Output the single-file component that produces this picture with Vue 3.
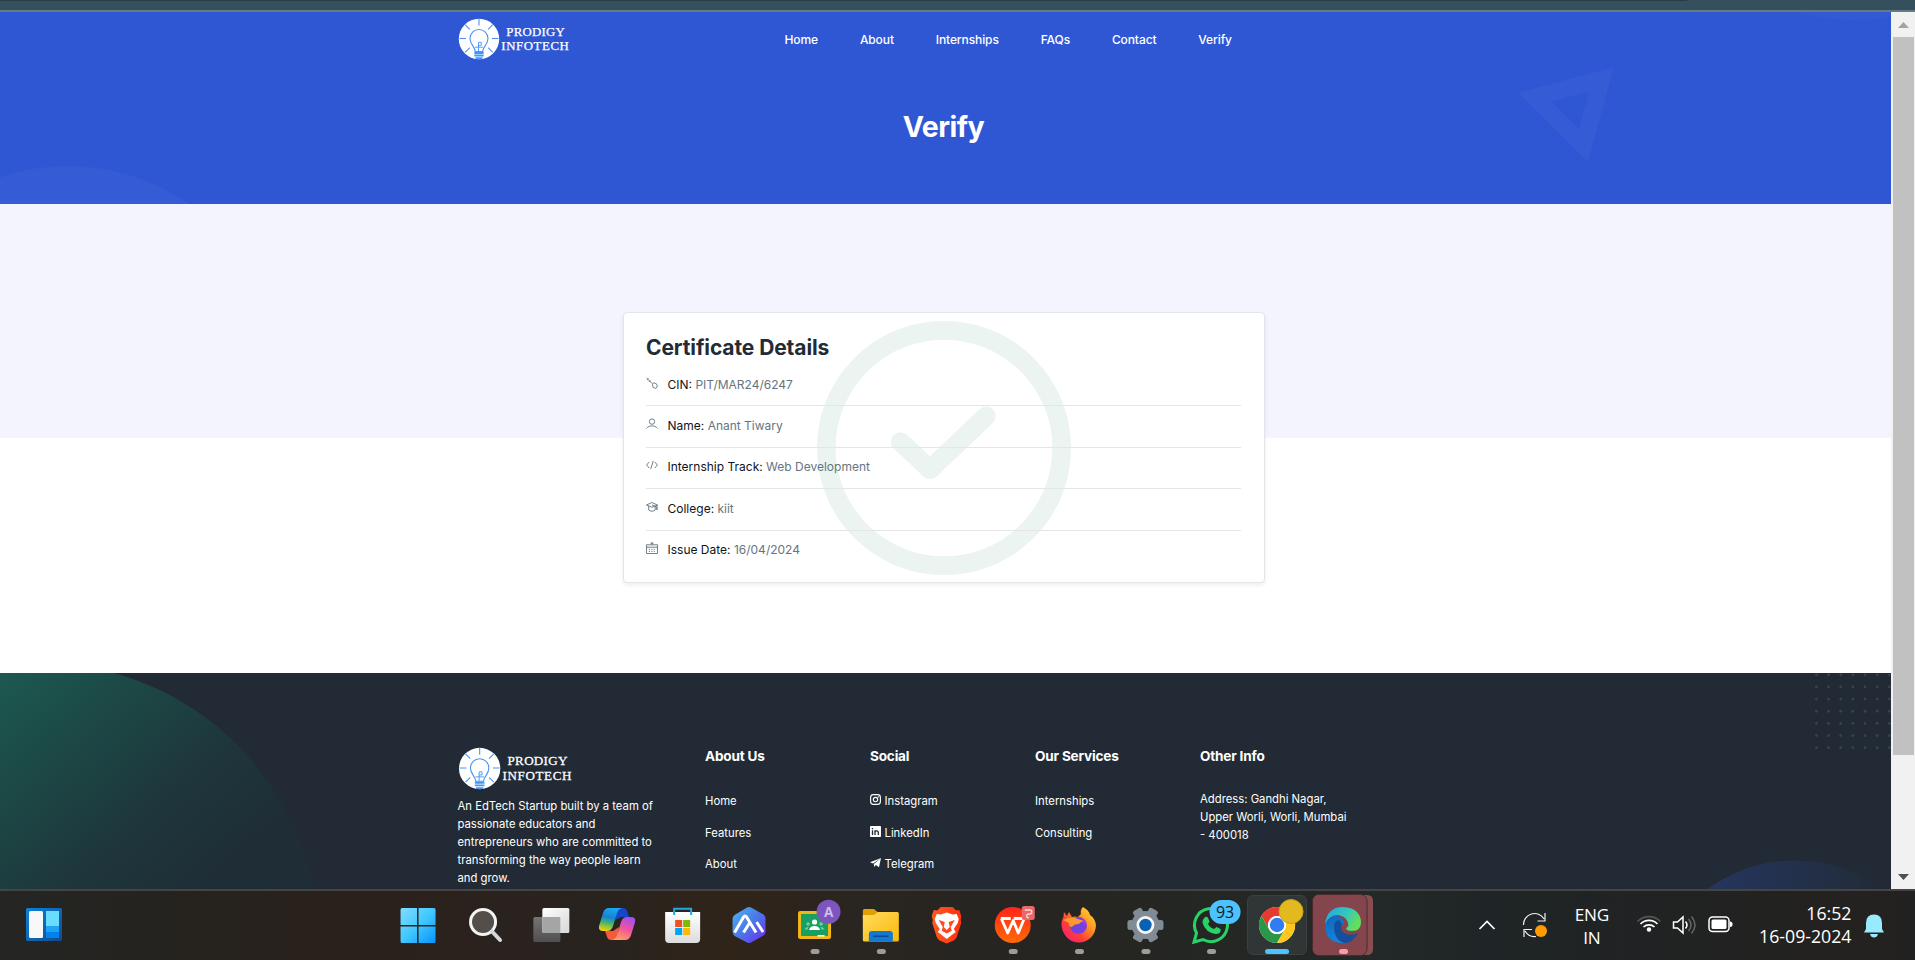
<script setup>
const navLinks = ['Home', 'About', 'Internships', 'FAQs', 'Contact', 'Verify']

const details = [
  { icon: 'key', label: 'CIN:', value: 'PIT/MAR24/6247' },
  { icon: 'user', label: 'Name:', value: 'Anant Tiwary' },
  { icon: 'code', label: 'Internship Track:', value: 'Web Development' },
  { icon: 'cap', label: 'College:', value: 'kiit' },
  { icon: 'calendar', label: 'Issue Date:', value: '16/04/2024' }
]

const dots = []
for (let r = 0; r < 7; r++) for (let c = 0; c < 7; c++) dots.push([1816.4 + c * 12.15, 1.8 + r * 12.15])
const rays = [0, 45, 90, 135, 225, 270, 315]
const teeth = [0, 60, 120, 180, 240, 300]
</script>

<template>
  <div class="screen">
    <svg width="0" height="0" class="defs" aria-hidden="true">
      <defs>
        <symbol id="logo" viewBox="0 0 116 44">
          <circle cx="21" cy="21" r="20.2" fill="#fff" />
          <g stroke="#4694f8" stroke-width="1.1" fill="none">
            <path v-for="a in rays" :key="a" d="M21 1v6.5" :transform="`rotate(${a} 21 20.5)`" />
            <path d="M17.2 33.5c0-5-5.2-6.500-5.200-13a9 9 0 0 1 18 0c0 6.500-5.200 8-5.200 13z" />
            <path d="M20.500 33V24.300h2.800v3h-2.800M17 29.200h8.200" stroke-width=".9" />
            <path d="M16.300 35h9.400M16.300 37.500h9.400M17.500 40.200h7" stroke-width="1.8" />
          </g>
          <g fill="#fff" stroke="#fff" stroke-width=".25" font-family="'Liberation Serif', serif" font-size="12.8">
            <text x="48.300" y="17.500" textLength="58.500">PRODIGY</text>
            <text x="43.300" y="32" textLength="67.500">INFOTECH</text>
          </g>
        </symbol>
      </defs>
    </svg>

    <div class="chrome-edge"></div>

    <div class="viewport">
      <main class="page">
        <header class="hero">
          <svg class="backdrop" width="1891" height="192" viewBox="0 12 1891 192">
            <circle cx="68" cy="379" r="213" fill="#355bd5" />
            <circle cx="1855" cy="-193" r="213" fill="#335ad6" />
            <path fill="#365cd5" fill-rule="evenodd" d="M1518 92.500 1613.500 67.500 1588 162zM1551 101.500 1579 129 1589 91.500z" />
          </svg>
          <div class="bar">
            <svg class="logo" width="116" height="44"><use href="#logo" /></svg>
            <nav>
              <a v-for="l in navLinks" :key="l">{{ l }}</a>
            </nav>
          </div>
          <h1>Verify</h1>
        </header>

        <section class="verify">
          <div class="card">
            <svg class="check" width="256" height="256" viewBox="0 0 256 256" fill="none" stroke="#ebf4f0">
              <circle cx="128" cy="128" r="117.700" stroke-width="18.700" />
              <path d="M84.500 121.800 114 149.500 170.300 96" stroke-width="19" stroke-linecap="round" stroke-linejoin="round" />
            </svg>
            <h2>Certificate Details</h2>
            <ul>
              <li v-for="d in details" :key="d.label">
                <svg class="ico" width="12" height="12" viewBox="0 0 12 12" fill="none" stroke="#6a7983" stroke-width=".95">
                  <template v-if="d.icon === 'key'">
                    <path d="M.5.8 6.500 6.800M1 3.200 2.600 1.700M2.800 5 4.400 3.400" />
                    <path d="M6.300 7.200 7.900 5.700 10.900 7.300 11.200 10 9.600 11.400 7.200 10.500z" />
                  </template>
                  <template v-else-if="d.icon === 'user'">
                    <circle cx="6" cy="3.600" r="2.700" />
                    <path d="M.5 10.500C2 8.500 4 7.900 6 7.900s4 .6 5.500 2.600" />
                  </template>
                  <path v-else-if="d.icon === 'code'" d="M3.200 3 .6 6l2.600 3M8.800 3l2.600 3-2.600 3M7.300 1.800 4.700 10" />
                  <template v-else-if="d.icon === 'cap'">
                    <path d="M.5 4 5.800 1.500 11.500 4 6 6.300zM2.700 5v4c2 1.600 4.800 1.600 6.500 0V5M11 4v5" />
                    <path d="M6 4l4.800 2v3" />
                  </template>
                  <template v-else>
                    <path d="M.5 2.800h11v8.700H.5zM.5 5.200h11M6 0v3M4.500 1.300h3" />
                    <path d="M2.800 7.300h6.800M2.800 9.400h6.800" stroke-dasharray="1.200 1.200" />
                  </template>
                </svg>
                <span><b>{{ d.label }}</b> {{ d.value }}</span>
              </li>
            </ul>
          </div>
        </section>

        <footer>
          <svg class="backdrop" width="1891" height="216" viewBox="0 0 1891 216">
            <defs>
              <linearGradient id="green" gradientUnits="userSpaceOnUse" x1="-20" y1="-30" x2="200" y2="220">
                <stop offset="0" stop-color="#1c6055" />
                <stop offset=".35" stop-color="#1c4b47" />
                <stop offset=".7" stop-color="#1e373c" />
                <stop offset="1" stop-color="#1f2d36" />
              </linearGradient>
              <linearGradient id="navy" gradientUnits="userSpaceOnUse" x1="1700" y1="210" x2="1880" y2="230">
                <stop offset="0" stop-color="#253660" />
                <stop offset="1" stop-color="#212b37" />
              </linearGradient>
            </defs>
            <circle cx="40" cy="268" r="278" fill="url(#green)" />
            <circle cx="1795" cy="335.500" r="148" fill="url(#navy)" />
            <circle v-for="(p, i) in dots" :key="i" :cx="p[0]" :cy="p[1]" r="1.400" fill="#39434d" />
          </svg>
          <div class="cols">
            <div class="about">
              <svg class="logo" width="119" height="45" viewBox="0 0 116 44"><use href="#logo" width="116" height="44" /></svg>
              <p>An EdTech Startup built by a team of passionate educators and entrepreneurs who are committed to transforming the way people learn and grow.</p>
            </div>
            <div>
              <h3>About Us</h3>
              <a>Home</a><a>Features</a><a>About</a>
            </div>
            <div>
              <h3>Social</h3>
              <a>
                <svg width="11" height="11" viewBox="0 0 11 11" fill="none" stroke="#fff" stroke-width="1.150">
                  <rect x=".6" y=".6" width="9.800" height="9.800" rx="2.800" /><circle cx="5.500" cy="5.500" r="2.200" /><path d="M7.700 2.900h1.200" />
                </svg>Instagram</a>
              <a>
                <svg width="11" height="11" viewBox="0 0 11 11">
                  <rect width="11" height="11" rx=".8" fill="#fff" />
                  <path d="M2.500 4.300V9M2.500 2v1.200M5 9V4.300M5 6.300c0-2 3.300-2 3.300 0V9" fill="none" stroke="#222b35" stroke-width="1.300" />
                </svg>LinkedIn</a>
              <a>
                <svg width="11" height="11" viewBox="0 0 11 11" fill="#fff">
                  <path d="M11 1 0 5.200l3 1.300zM11 1 3.800 7l.4 3 1.600-1.900L9 10.200z" />
                </svg>Telegram</a>
            </div>
            <div>
              <h3>Our Services</h3>
              <a>Internships</a><a>Consulting</a>
            </div>
            <div>
              <h3>Other Info</h3>
              <p class="addr">Address: Gandhi Nagar, Upper Worli, Worli, Mumbai - 400018</p>
            </div>
          </div>
        </footer>
      </main>

      <aside class="scrollbar">
        <svg width="24" height="25"><path d="M7 16 12.500 10 18 16z" fill="#a3a3a3" /></svg>
        <div class="thumb"></div>
        <svg width="24" height="25"><path d="M7 12 12.500 18 18 12z" fill="#505050" /></svg>
      </aside>
    </div>

    <div class="taskbar">
      <svg class="widgets" width="36" height="33" viewBox="0 0 36 33">
        <defs>
          <linearGradient id="wg" x2="1" y2="1"><stop stop-color="#0a84dc" /><stop offset="1" stop-color="#134a8c" /></linearGradient>
        </defs>
        <rect width="36" height="33" rx="1.500" fill="url(#wg)" />
        <rect x="3" y="3" width="14" height="27" rx="1.500" fill="#f8f8f8" />
        <path d="M20 3h13v15H20z" fill="#6adcff" /><path d="M20 18h13v6H20z" fill="#1ba4f8" /><path d="M20 24h13v6H20z" fill="#0582ea" />
      </svg>

      <div class="apps">
        <svg viewBox="0 0 66 69">
          <defs><linearGradient id="win" gradientUnits="userSpaceOnUse" x1="16" y1="17" x2="50" y2="52"><stop stop-color="#80dcff" /><stop offset=".5" stop-color="#40c8ff" /><stop offset="1" stop-color="#0894fc" /></linearGradient></defs>
          <path fill="url(#win)" d="M15.500 18.500q0-1.500 1.500-1.500h15v17H15.500zM33.500 17H49q1.500 0 1.500 1.500V34h-17zM15.500 35.500H32V52H17q-1.500 0-1.500-1.500zM33.500 35.500h17v15q0 1.500-1.500 1.500H33.500z" />
        </svg>
        <svg viewBox="-2 0 66 69">
          <circle cx="30" cy="31" r="12.500" fill="#534e49" stroke="#f4f4f4" stroke-width="3" />
          <path d="M39 40.500 47 49" stroke="#d4d8de" stroke-width="4" stroke-linecap="round" />
        </svg>
        <svg viewBox="-1.300 0 66 69">
          <defs>
            <linearGradient id="tv" x2="1" y2="1"><stop stop-color="#fff" /><stop offset="1" stop-color="#d7d7d7" /></linearGradient>
            <linearGradient id="tv2" x2="0" y2="1"><stop stop-color="#747474" /><stop offset="1" stop-color="#505050" /></linearGradient>
          </defs>
          <rect x="15" y="26" width="27" height="25" rx="1.500" fill="url(#tv2)" />
          <rect x="24" y="17" width="27" height="25" rx="1.500" fill="url(#tv)" />
          <path d="M24 26h18v16H24z" fill="#a5a5a5" />
        </svg>
        <svg viewBox="-1 0 66 69">
          <defs>
            <linearGradient id="cp1" x1=".5" x2=".3" y2="1"><stop stop-color="#1aa8f0" /><stop offset=".4" stop-color="#1583d4" /><stop offset=".65" stop-color="#45b46d" /><stop offset="1" stop-color="#f6d20a" /></linearGradient>
            <linearGradient id="cp2" x1=".7" x2=".3" y2="1"><stop stop-color="#a44df0" /><stop offset=".5" stop-color="#f0559c" /><stop offset="1" stop-color="#ffa35c" /></linearGradient>
          </defs>
          <path d="M33 17h6q3 0 4 3l2 6h-8l-6 3z" fill="#1747c8" />
          <path d="M33 49h-6q-3 0-4-3l-2-6h8l6-4z" fill="#f55a3c" />
          <path d="M25 17h13q-4 1-5 5l-4 13q-1.500 5-6 5h-4q-5 0-4-5l4-13q1.500-5 6-5z" fill="url(#cp1)" />
          <path d="M41 49H28q4-1 5-5l4-13q1.500-5 6-5h4q5 0 4 5l-4 13q-1.500 5-6 5z" fill="url(#cp2)" />
        </svg>
        <svg viewBox="-.6 0 66 69">
          <defs><linearGradient id="st" x2="0" y2="1"><stop stop-color="#fff" /><stop offset="1" stop-color="#dcdcdc" /></linearGradient></defs>
          <path d="M15.500 21h35v27q0 4-4 4h-27q-4 0-4-4z" fill="url(#st)" />
          <path d="M24.500 24v-6.200h17V24" fill="none" stroke="#20a8ec" stroke-width="2" />
          <path d="M25.500 29h7v7h-7z" fill="#f25022" /><path d="M33.500 29h7v7h-7z" fill="#7fba00" />
          <path d="M25.500 37h7v7h-7z" fill="#00a4ef" /><path d="M33.500 37h7v7h-7z" fill="#ffb900" />
        </svg>
        <svg viewBox="-1 0 66 69">
          <defs><linearGradient id="hx" x1="0" x2="1" y2="1"><stop stop-color="#50b4f0" /><stop offset=".5" stop-color="#4a78e8" /><stop offset="1" stop-color="#7028f0" /></linearGradient></defs>
          <path d="M31 16.500q2-1 4 0l12.500 7q2 1.500 2 4v13q0 2.500-2 4L35 51.500q-2 1-4 0L18.500 45q-2-1.500-2-4V28q0-2.500 2-4z" fill="url(#hx)" />
          <path d="M18.500 41.500 27.500 26q1.500-2 3 0l9.500 15.500M27.500 41.500 33.500 32M40.500 31l6.500 10" fill="none" stroke="#fff" stroke-width="3" />
        </svg>
        <svg viewBox="-1.500 0 66 69">
          <rect x="15.500" y="20" width="33" height="28" rx="2" fill="#f4b815" />
          <path d="M18.500 23h27v22h-27z" fill="#17a062" />
          <g fill="#fff"><circle cx="32" cy="31" r="2.600" /><path d="M26.500 39q1-4 5.500-4t5.500 4zM35 44h7v1.500h-7z" /></g>
          <g fill="#7cc9a3"><circle cx="25.500" cy="33" r="1.800" /><circle cx="38.500" cy="33" r="1.800" /><path d="M22 38.500q1-3 4-2.500l-1 2.500zM42 38.500q-1-3-4-2.500l1 2.500z" /></g>
          <circle cx="46" cy="20.800" r="12" fill="#7d55be" />
          <text x="46" y="25.800" text-anchor="middle" class="badge" font-size="13.500" fill="#cdbce9">A</text>
          <rect class="dot" x="28" y="58" width="9" height="5" rx="2.500" />
        </svg>
        <svg viewBox="-.8 0 66 69">
          <defs><linearGradient id="fo" x2="1" y2="1"><stop stop-color="#ffdc60" /><stop offset="1" stop-color="#fcb808" /></linearGradient></defs>
          <path d="M15 19.500q0-1.500 1.500-1.500H26l5 4v6H15z" fill="#e0a000" />
          <path d="M15 24h11l4-3h19.500q1.500 0 1.500 1.500V49q0 1.500-1.500 1.500H16.500Q15 50.500 15 49z" fill="url(#fo)" />
          <path d="M21 50.500V43q0-3 3-3h18q3 0 3 3v7.500z" fill="#1478d0" /><path d="M26 45.200h14" stroke="#0a4a98" stroke-width="1.600" stroke-linecap="round" />
          <rect class="dot" x="29" y="58" width="9" height="5" rx="2.500" />
        </svg>
        <svg viewBox="-.7 0 66 69">
          <defs><linearGradient id="br" x2="1"><stop stop-color="#ff5a20" /><stop offset="1" stop-color="#ff3010" /></linearGradient></defs>
          <path d="M27 16h12l3.500 3.500 3-.5 2 6-.5 4 .5 3L43 46q-1 2-3 3.500L33 52.500l-7-3Q24 48 23 46l-4.500-14 .5-3-1-4 2-6 3.500.5z" fill="url(#br)" />
          <path d="M23 23l4 .5 6-2 6 2 4-.5 2 5-1 4-4 6 2 3-4 3-5 4-5-4-4-3 2-3-4-6-1-4z" fill="#fff" />
          <path d="M25 29l6 2-1 5 3 3 3-3-1-5 6-2-4 7 1 4-5 2.500-5-2.500 1-4z" fill="#ff4820" />
          <path d="M30 25h6l-3 10zM28 40l5 3 5-3-1 3-4 1-4-1z" fill="#fff" />
        </svg>
        <svg viewBox="-.7 0 66 69">
          <defs><linearGradient id="wp" x2="0" y2="1"><stop stop-color="#ff2418" /><stop offset="1" stop-color="#ff6a08" /></linearGradient></defs>
          <circle cx="33" cy="34" r="18" fill="url(#wp)" />
          <path d="M21 27.500h10M21.500 27.500 28 42l5.500-12.500L38.500 42l6-14.500H34" fill="none" stroke="#fff" stroke-width="2.800" stroke-linejoin="round" />
          <rect x="42" y="15" width="13" height="14" rx="2.500" fill="#e8696a" />
          <path d="M45 19h5q2 0 2 2t-2 2h-1q-2 0-2 2t2 1.500" fill="none" stroke="#ffd8d8" stroke-width="1.300" />
          <rect class="dot" x="29" y="58" width="9" height="5" rx="2.500" />
        </svg>
        <svg viewBox="-.9 0 66 69">
          <defs><linearGradient id="ff" x1="1" x2="0" y2="1"><stop stop-color="#ffe83c" /><stop offset=".35" stop-color="#ff9a20" /><stop offset=".65" stop-color="#ff3c38" /><stop offset="1" stop-color="#f0188c" /></linearGradient></defs>
          <path d="M37 16q6 3 7 8 5 3 6 10 0 7-5 12.500-6 5.500-13 5-7-.5-11.500-5.500-5-6-5-13 0-4 2-7l.5-5 3 4 2-4 3 5q3-1 6 0l3-3q-1-4 2-7z" fill="url(#ff)" />
          <circle cx="32.500" cy="34.500" r="8.500" fill="#7441e0" />
          <path d="M17 29q8-4 15-1l6 2q-4 1-5 3-5 0-7 3-4-1-3-4z" fill="#ff9a28" />
          <path d="M36 27q5 2 5 8-1-2-3-3z" fill="#b03cd8" />
          <rect class="dot" x="29" y="58" width="9" height="5" rx="2.500" />
        </svg>
        <svg viewBox="-.4 0 66 69">
          <g fill="#818b96"><circle cx="33" cy="34" r="14" />
            <path v-for="a in teeth" :key="a" d="M40 29.500l8.500-.5q2.500 0 2.500 2.500v5q0 2.500-2.500 2.500l-8.500-.5z" :transform="`rotate(${a} 33 34)`" /></g>
          <circle cx="33" cy="34" r="7.600" fill="#0a61b2" stroke="#f6f6f6" stroke-width="2.800" />
          <rect class="dot" x="29" y="58" width="9" height="5" rx="2.500" />
        </svg>
        <svg viewBox="0 0 66 69">
          <path d="M16 51l2.500-9A16.500 16.500 0 1 1 25 48.500z" fill="none" stroke="#27d366" stroke-width="3" />
          <path d="M27 26q2-1 3 1l1.500 3.500L30 33q2 4 6 5l2.500-2 4 2q1 5-5 5-10-1.500-13-11 0-4 2.500-6z" fill="#27d366" />
          <rect x="31.500" y="9" width="31" height="24" rx="12" fill="#4cc2ff" />
          <text x="47" y="26.500" text-anchor="middle" class="num" font-size="16" fill="#0c1a22">93</text>
          <rect class="dot" x="29" y="58" width="9" height="5" rx="2.500" />
        </svg>
        <svg viewBox="0 0 66 69">
          <rect x="3.500" y="4.500" width="59" height="59" rx="5.500" fill="#303535" stroke="#3c4040" />
          <circle cx="33" cy="34" r="18" fill="#fff" />
          <path d="M33 25h15.600A18 18 0 0 0 17.400 25l7.800 13.500A9 9 0 0 1 33 25z" fill="#e63b30" />
          <path d="M25.200 38.500 17.400 25A18 18 0 0 0 33 52l7.800-13.500A9 9 0 0 1 25.200 38.500z" fill="#2a9846" />
          <path d="M33 25h15.600A18 18 0 0 1 33 52l7.800-13.500A9 9 0 0 0 33 25z" fill="#fcc820" />
          <circle cx="33" cy="34" r="9" fill="#fff" /><circle cx="33" cy="34" r="7.200" fill="#2f7df0" />
          <circle cx="47" cy="20.500" r="12" fill="#e2b91f" stroke="#c9a21a" />
          <rect x="21" y="58" width="24" height="5" rx="2.500" fill="#4cc2ff" />
        </svg>
        <svg viewBox="0 0 66 69">
          <defs>
            <linearGradient id="ed" x2="1" y2=".4"><stop stop-color="#28a0e0" /><stop offset=".6" stop-color="#34c8c0" /><stop offset="1" stop-color="#60e05c" /></linearGradient>
            <linearGradient id="ed2" x2=".4" y2="1"><stop stop-color="#1464b8" /><stop offset="1" stop-color="#0f88e0" /></linearGradient>
          </defs>
          <path d="M52 4h5q6 0 6 6v48q0 6-6 6h-5z" fill="#874d51" />
          <rect x="2.500" y="3.500" width="54.500" height="61" rx="6.500" fill="#84464c" stroke="#4a2d30" />
          <rect x="3" y="4" width="52" height="60" rx="6" fill="#84464c" />
          <path d="M15 34Q15 25 22 24q9 0 12 7l-3 5q-1 10 10 12-3 4-9 4-17-1-17-18z" fill="url(#ed2)" />
          <path d="M24 35q0-5 5-6l3 4q-3 7 4 10 6 2 12-1-5 10-14 10-10-3-10-17z" fill="#134f9e" />
          <path d="M15 33Q17 16 33 16q17 1 18 15 0 9-9 9-6 0-6-3 3-1 2-5-2-7-10-8-9 0-13 9z" fill="url(#ed)" />
          <rect x="29" y="58" width="9" height="5" rx="2.500" fill="#ff9aa4" />
        </svg>
      </div>

      <div class="tray">
        <svg class="up" width="18" height="12" fill="none" stroke="#fff" stroke-width="1.700"><path d="M1.500 10 9 2.500 16.500 10" /></svg>
        <svg class="sync" width="26" height="26" fill="none" stroke="#f2f2f2" stroke-width="1.200">
          <path d="M1.500 13A11 11 0 0 1 22 7M23 1v8h-7.500M2 25v-7.500h8M3 19q4 6.500 11 5.500" />
          <circle cx="19" cy="19" r="6" fill="#ff9a00" stroke="none" />
        </svg>
        <div class="lang">ENG<br>IN</div>
        <svg class="wifi" width="26" height="20" fill="none" stroke="#fff" stroke-width="1.700">
          <path d="M1.500 8.500a16 16 0 0 1 23 0" stroke="#555" /><path d="M4.500 11a12 12 0 0 1 17 0M7.500 14a8 8 0 0 1 11 0" />
          <circle cx="13" cy="16.500" r="2.200" fill="#fff" stroke="none" />
        </svg>
        <svg class="vol" width="25" height="20" fill="none" stroke="#fff" stroke-width="1.500">
          <path d="M1.500 7h4L11 2v16L5.500 13h-4zM13.500 6.500q3 3.500 0 7" /><path d="M16.500 4q5 6 0 12M19.500 1.500q7 8.500 0 17" stroke="#666" />
        </svg>
        <svg class="bat" width="26" height="18">
          <rect x="1" y="1" width="20" height="14.500" rx="3.500" fill="none" stroke="#fff" stroke-width="1.500" />
          <rect x="3.500" y="3.500" width="15" height="9.500" rx="1.500" fill="#fff" /><path d="M22 5.500q2.500 0 2.500 2.800T22 11z" fill="#fff" />
        </svg>
        <div class="clock">16:52<br>16-09-2024</div>
        <svg class="bell" width="20" height="24" fill="#98eaff">
          <path d="M0 18.500 2 15V9q0-8.500 8-8.500T18 9v6l2 3.500zM6 20h8q-1 3.500-4 3.500T6 20z" />
        </svg>
      </div>
    </div>
  </div>
</template>

<style>
body { margin: 0; overflow: hidden; }
</style>

<style scoped>
.screen {
  width: 1915px; height: 960px; overflow: hidden;
  display: flex; flex-direction: column;
  font-family: Inter, 'Liberation Sans', sans-serif;
}
.defs { position: absolute; }
.chrome-edge {
  flex: none; height: 12px; box-sizing: border-box;
  border-bottom: 2px solid #637c82;
  background: linear-gradient(90deg, #2c3b43 1685px, #33505c 1690px) top / 100% 1px no-repeat, #33505c;
}
.viewport { flex: none; height: 877px; display: flex; overflow: hidden; }
.page { width: 1891px; display: flex; flex-direction: column; }
.backdrop { position: absolute; left: 0; top: 0; }

.hero { position: relative; height: 192px; background: #2f57d4; overflow: hidden; color: #fff; }
.bar { position: relative; display: flex; padding-left: 458px; height: 60px; }
.bar .logo { margin-top: 6px; flex: none; }
nav { display: flex; gap: 41.900px; margin: 16px 0 0 210.5px; }
nav a { font-size: 12px; line-height: 24px; font-weight: 500; letter-spacing: -.1px; }
h1 {
  position: relative; margin: 36.500px 0 0; padding-right: 4px; text-align: center;
  font-size: 28.500px; line-height: 36px; font-weight: 700; letter-spacing: -.5px;
}

.verify {
  height: 469px; display: flex; justify-content: flex-start;
  background: linear-gradient(#f4f4ff 234px, #fff 234px);
}
.card {
  position: relative; box-sizing: border-box; width: 642px; height: 271px;
  margin: 108px 0 0 623px; padding: 22px 23px 0 22px;
  background: #fff; border: 1px solid #e4e5ea; border-radius: 4px;
  box-shadow: 0 2px 4px rgba(0, 0, 0, .07);
}
.check { position: absolute; left: 191.700px; top: 6.700px; }
h2 { position: relative; margin: 0 0 4px; font-size: 21px; line-height: 26px; font-weight: 700; letter-spacing: -.1px; color: #222b36; }
ul { position: relative; list-style: none; margin: 0; padding: 0; }
li {
  display: flex; align-items: center; gap: 9.500px; box-sizing: border-box; height: 41.400px; padding-bottom: 1px;
  border-bottom: 1px solid #e3e5e8; font-size: 12px; line-height: 20px; color: #65757f;
}
li:last-child { border-color: transparent; }
li b { font-weight: 400; color: #10151b; }
.ico { margin-bottom: 4px; flex: none; }

footer { position: relative; height: 216px; background: #222b35; overflow: hidden; color: #fff; }
.cols { position: relative; display: grid; grid-template-columns: 247.500px 165px 165px 165px 165px; padding: 73px 0 0 457.500px; }
h3 { margin: 0 0 26px; font-size: 13.600px; line-height: 20px; font-weight: 700; letter-spacing: -.2px; }
.cols a { display: flex; align-items: center; gap: 3.500px; font-size: 11.300px; line-height: 18px; margin-bottom: 13.600px; }
.cols a svg { margin-bottom: 3px; }
.about .logo { display: block; margin-top: 1px; }
p { margin: 4.600px 0 0; width: 202px; font-size: 11.300px; line-height: 18px; }
.cols .addr { margin-top: -2.400px; width: 152px; }

.scrollbar { width: 24px; background: #f1f1f1; display: flex; flex-direction: column; }
.thumb { height: 718px; margin: 0 1px 0 2px; background: #c1c1c1; }
.scrollbar svg { flex: none; }
.scrollbar svg:last-child { margin-top: 107px; }

.taskbar {
  flex: none; height: 71px; box-sizing: border-box; display: flex; border-top: 2px solid #464340;
  background: linear-gradient(90deg, #252524 0, #24231f 150px, #2a211c 340px, #2a221e 500px, #28231f 600px, #302419 730px, #292521 870px, #262521 1080px, #222928 1380px, #1f2526 1500px, #212223 1650px, #242220 1880px, #212121 1915px);
}
.widgets { margin: 17px 0 0 26px; flex: none; }
.apps { display: flex; margin-left: 322.500px; flex: none; }
.apps svg { width: 66.100px; height: 69px; flex: none; }
.dot { fill: #9c9c9a; }
.badge { font-family: 'Open Sans', sans-serif; font-weight: 700; }
.num { font-family: 'Open Sans', sans-serif; }
.tray { display: flex; align-items: flex-start; color: #fff; font-family: 'Open Sans', 'Noto Sans', sans-serif; font-size: 17.200px; line-height: 23.500px; margin-left: 102px; }
.tray svg, .tray div { flex: none; }
.up { margin-top: 28px; }
.sync { margin: 21px 0 0 26px; }
.lang { margin: 11.500px 0 0 26px; width: 36px; text-align: center; letter-spacing: -.2px; }
.wifi { margin: 22px 0 0 26px; }
.vol { margin: 24px 0 0 10px; }
.bat { margin: 25px 0 0 11px; }
.clock { width: 110px; margin: 10.500px 0 0 7.500px; text-align: right; font-size: 17.700px; }
.bell { margin: 22.500px 0 0 12.500px; }
</style>
